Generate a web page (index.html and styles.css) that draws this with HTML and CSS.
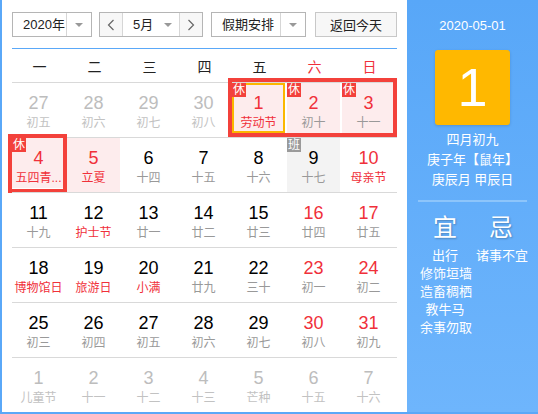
FILE: index.html
```html
<!DOCTYPE html>
<html lang="zh">
<head>
<meta charset="utf-8">
<link rel="stylesheet" href="styles.css">
</head>
<body>
<div class="widget">
  <div class="main">
    <div class="toolbar">
      <div class="sel sel-year">
        <span class="sel-text">2020年</span>
        <span class="sel-drop"><i class="tri"></i></span>
      </div>
      <div class="sel sel-month">
        <span class="nav"><svg width="8" height="12" viewBox="0 0 8 12"><polyline points="6.5,1 1.5,6 6.5,11" fill="none" stroke="#666" stroke-width="1.2"/></svg></span>
        <span class="month-mid"><span class="sel-text">5月</span><i class="tri"></i></span>
        <span class="nav"><svg width="8" height="12" viewBox="0 0 8 12"><polyline points="1.5,1 6.5,6 1.5,11" fill="none" stroke="#666" stroke-width="1.2"/></svg></span>
      </div>
      <div class="sel sel-hol">
        <span class="sel-text">假期安排</span>
        <span class="sel-drop"><i class="tri"></i></span>
      </div>
      <div class="btn-today">返回今天</div>
    </div>
    <div class="weekhead">
      <span>一</span><span>二</span><span>三</span><span>四</span><span>五</span><span class="we">六</span><span class="we">日</span>
    </div>
    <div class="week">
      <div class="day other"><b>27</b><em>初五</em></div>
      <div class="day other"><b>28</b><em>初六</em></div>
      <div class="day other"><b>29</b><em>初七</em></div>
      <div class="day other"><b>30</b><em>初八</em></div>
      <div class="day hol inbox sel-day"><i class="badge">休</i><b>1</b><em class="fest">劳动节</em></div>
      <div class="day hol inbox"><i class="badge">休</i><b>2</b><em>初十</em></div>
      <div class="day hol inbox"><i class="badge">休</i><b>3</b><em>十一</em></div>
      <div class="holbox holbox-a"></div>
    </div>
    <div class="week">
      <div class="day hol inbox"><i class="badge">休</i><b>4</b><em class="fest">五四青...</em></div>
      <div class="day hol"><b>5</b><em class="fest">立夏</em></div>
      <div class="day"><b>6</b><em>十四</em></div>
      <div class="day"><b>7</b><em>十五</em></div>
      <div class="day"><b>8</b><em>十六</em></div>
      <div class="day work"><i class="badge badge-work">班</i><b>9</b><em>十七</em></div>
      <div class="day red"><b>10</b><em class="fest">母亲节</em></div>
      <div class="holbox holbox-b"></div>
    </div>
    <div class="week">
      <div class="day"><b>11</b><em>十九</em></div>
      <div class="day"><b>12</b><em class="fest">护士节</em></div>
      <div class="day"><b>13</b><em>廿一</em></div>
      <div class="day"><b>14</b><em>廿二</em></div>
      <div class="day"><b>15</b><em>廿三</em></div>
      <div class="day red"><b>16</b><em>廿四</em></div>
      <div class="day red"><b>17</b><em>廿五</em></div>
    </div>
    <div class="week">
      <div class="day"><b>18</b><em class="fest">博物馆日</em></div>
      <div class="day"><b>19</b><em class="fest">旅游日</em></div>
      <div class="day"><b>20</b><em class="fest">小满</em></div>
      <div class="day"><b>21</b><em>廿九</em></div>
      <div class="day"><b>22</b><em>三十</em></div>
      <div class="day red"><b>23</b><em>初一</em></div>
      <div class="day red"><b>24</b><em>初二</em></div>
    </div>
    <div class="week">
      <div class="day"><b>25</b><em>初三</em></div>
      <div class="day"><b>26</b><em>初四</em></div>
      <div class="day"><b>27</b><em>初五</em></div>
      <div class="day"><b>28</b><em>初六</em></div>
      <div class="day"><b>29</b><em>初七</em></div>
      <div class="day red"><b>30</b><em>初八</em></div>
      <div class="day red"><b>31</b><em>初九</em></div>
    </div>
    <div class="week">
      <div class="day other"><b>1</b><em>儿童节</em></div>
      <div class="day other"><b>2</b><em>十一</em></div>
      <div class="day other"><b>3</b><em>十二</em></div>
      <div class="day other"><b>4</b><em>十三</em></div>
      <div class="day other"><b>5</b><em>芒种</em></div>
      <div class="day other"><b>6</b><em>十五</em></div>
      <div class="day other"><b>7</b><em>十六</em></div>
    </div>
  </div>
  <div class="side">
    <div class="side-date">2020-05-01</div>
    <div class="side-day">1</div>
    <div class="side-lunar">
      <div>四月初九</div>
      <div>庚子年【鼠年】</div>
      <div>庚辰月 甲辰日</div>
    </div>
    <div class="side-sep"></div>
    <div class="yiji">
      <div class="yj-col">
        <div class="yj-title">宜</div>
        <div>出行</div>
        <div>修饰垣墙</div>
        <div>造畜稠栖</div>
        <div>教牛马</div>
        <div>余事勿取</div>
      </div>
      <div class="yj-col">
        <div class="yj-title">忌</div>
        <div>诸事不宜</div>
      </div>
    </div>
  </div>
</div>
</body>
</html>
```
FILE: styles.css
```css
html, body {
  margin: 0;
  padding: 0;
  background: #fff;
}
body {
  font-family: "Liberation Sans", "Noto Sans CJK SC", sans-serif;
  color: #000;
}
.widget {
  width: 536px;
  height: 412px;
  display: flex;
  border-left: 2px solid #5aa8f8;
  border-bottom: 2px solid #5aa8f8;
}
.main {
  width: 385px;
  padding: 0 10px;
  flex: none;
}
.toolbar {
  display: flex;
  align-items: stretch;
  height: 25px;
  margin-top: 12px;
  padding-bottom: 11px;
  border-bottom: 1px solid #5aa8f8;
  font-size: 13px;
  color: #222;
}
.sel {
  display: flex;
  align-items: stretch;
  border: 1px solid #b5b5b5;
  box-sizing: border-box;
  background: #fff;
}
.sel-year { width: 80px; }
.sel-month { width: 104px; margin-left: 7px; }
.sel-hol { width: 95px; margin-left: 8px; }
.sel-text {
  display: flex;
  align-items: center;
  flex: 1;
  padding-left: 10px;
  line-height: 23px;
}
.sel-drop {
  width: 24px;
  border-left: 1px solid #d6d6d6;
  display: flex;
  align-items: center;
  justify-content: center;
  flex: none;
}
.tri {
  display: block;
  width: 0;
  height: 0;
  border-left: 4px solid transparent;
  border-right: 4px solid transparent;
  border-top: 4px solid #999;
}
.nav {
  width: 22px;
  background: #f7f7f7;
  display: flex;
  align-items: center;
  justify-content: center;
  flex: none;
}
.nav:first-child { border-right: 1px solid #d6d6d6; }
.nav:last-child { border-left: 1px solid #d6d6d6; }
.month-mid {
  flex: 1;
  display: flex;
  align-items: center;
  padding-right: 7px;
}
.month-mid .sel-text { padding-left: 10px; }
.btn-today {
  width: 82px;
  margin-left: 9px;
  border: 1px solid #c8c8c8;
  box-sizing: border-box;
  background: #f7f7f7;
  display: flex;
  align-items: center;
  justify-content: center;
  color: #222;
}
.weekhead {
  display: grid;
  grid-template-columns: repeat(7, 55px);
  height: 33px;
  align-items: center;
  font-size: 14px;
  color: #222;
}
.weekhead span {
  text-align: center;
  padding-top: 1px;
}
.weekhead .we { color: #f0303a; }
.week {
  position: relative;
  display: grid;
  grid-template-columns: repeat(7, 55px);
  height: 54px;
  border-top: 1px solid #d9d9d9;
}
.day {
  position: relative;
  width: 53px;
  height: 54px;
  box-sizing: border-box;
  padding-top: 9px;
  text-align: center;
}
.day b {
  display: block;
  font-weight: normal;
  font-size: 18px;
  line-height: 22px;
  color: #000;
}
.day em {
  display: block;
  font-style: normal;
  font-size: 12px;
  line-height: 18px;
  color: #999;
  white-space: nowrap;
}
.day em.fest { color: #f0303a; }
.day.red b { color: #f0303a; }
.day.other b { color: #bdbdbd; }
.day.other em { color: #c2c2c2; }
.day.hol { background: #fdeced; }
.day.hol b { color: #f0303a; }
.day.inbox { height: 50px; }
.day.work { background: #f3f3f3; }
.day.sel-day { box-shadow: inset 0 0 0 2px #fbb700; }
.badge {
  position: absolute;
  left: 0;
  top: 0;
  width: 14px;
  height: 14px;
  background: #f3413b;
  color: #fff;
  font-style: normal;
  font-size: 12px;
  line-height: 14px;
  text-align: center;
}
.badge-work { background: #9a9a9a; }
.holbox {
  position: absolute;
  border: 4px solid #f3413b;
  box-sizing: border-box;
  pointer-events: none;
}
.holbox-a {
  left: 216px;
  top: -5px;
  width: 169px;
  height: 59px;
}
.holbox-b {
  left: -4px;
  top: -4px;
  width: 59px;
  height: 59px;
}
.side {
  flex: 1;
  background: linear-gradient(#58a7f8, #6eb5fc);
  color: #fff;
  display: flex;
  flex-direction: column;
  align-items: center;
  font-family: "Liberation Sans", "Noto Sans CJK SC", sans-serif;
}
.side-date {
  margin-top: 16px;
  font-size: 13px;
  line-height: 20px;
}
.side-day {
  margin-top: 14px;
  width: 75px;
  height: 75px;
  border-radius: 3px;
  background: #ffb800;
  box-shadow: 0 1px 3px rgba(0, 0, 0, 0.15);
  font-size: 54px;
  line-height: 75px;
  text-align: center;
}
.side-lunar {
  margin-top: 5px;
  font-size: 13px;
  line-height: 20px;
  text-align: center;
}
.side-sep {
  margin-top: 10px;
  align-self: stretch;
  margin-left: 11px;
  margin-right: 11px;
  height: 2px;
  background: #8dc5fb;
}
.yiji {
  align-self: stretch;
  display: flex;
  gap: 6px;
  padding-left: 13px;
  margin-top: 11px;
  font-size: 13px;
  line-height: 18px;
}
.yj-col {
  width: 50px;
  text-align: center;
  white-space: nowrap;
}
.yj-title {
  font-size: 24px;
  line-height: 30px;
  margin-bottom: 4px;
  text-shadow: 1px 1px 2px rgba(0, 0, 0, 0.25);
}
```
